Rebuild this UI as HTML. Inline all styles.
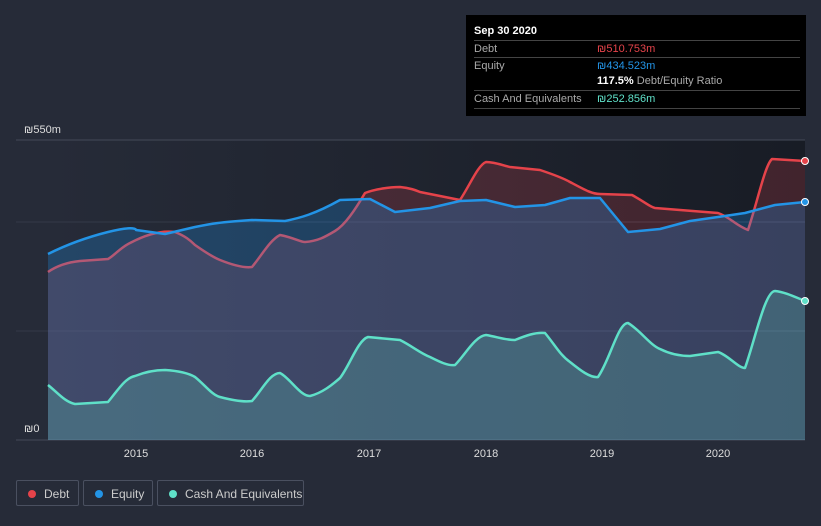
<!DOCTYPE html>
<html><head><meta charset="utf-8"><style>
body{margin:0;width:821px;height:526px;background:#262b38;font-family:"Liberation Sans",sans-serif;overflow:hidden;position:relative}
.tip{position:absolute;left:466px;top:15px;width:340px;height:101px;background:#000;color:#fff;font-size:11px}
.tip .r{position:absolute;left:8px;right:6px;border-top:1px solid #444;height:16px}
.tip span{position:absolute;top:2px}
.leg{position:absolute;top:480px;height:26px;border:1px solid #4a5060;border-radius:2px;color:#ccc;font-size:12px;line-height:26px;box-sizing:border-box}
.leg i{position:absolute;left:11px;top:9px;width:8px;height:8px;border-radius:50%}
.leg b{font-weight:normal;position:absolute;left:27px}
</style></head><body>
<svg width="821" height="526" style="position:absolute;left:0;top:0">
<defs><linearGradient id="bg" x1="0" y1="0" x2="1" y2="0"><stop offset="0" stop-color="#262b38"/><stop offset="1" stop-color="#181c25"/></linearGradient></defs>
<rect x="48" y="140" width="757" height="300" fill="url(#bg)"/>
<line x1="16" y1="140" x2="805" y2="140" stroke="#444a58"/>
<line x1="16" y1="222" x2="805" y2="222" stroke="#343a48"/>
<line x1="16" y1="331" x2="805" y2="331" stroke="#343a48"/>
<line x1="16" y1="440" x2="805" y2="440" stroke="#444a58"/>
<g stroke-linejoin="round" stroke-width="2.5">
<path d="M48,272 C58,265 70,262 80,261 L108,259 C115,255 120,248 130,243 C145,235 160,230 175,232 C185,236 190,240 195,245 C205,252 215,258 220,260 C235,266 245,268 252,267 C262,255 270,240 280,235 C295,238 300,242 305,242 C318,241 325,237 335,231 C345,225 355,210 365,193 C375,189 390,187 400,187 C410,188 415,190 420,192 L460,200 C470,185 478,165 486,162 C495,162 505,166 510,167 L540,170 C555,175 563,178 570,182 C585,190 592,194 600,194 L632,195 C645,202 650,207 655,208 L680,210 L718,213 C730,217 735,225 748,230 C758,200 765,165 772,159 L805,161 L805,440 L48,440Z" fill="rgba(232,70,80,0.2)" stroke="none"/>
<path d="M48,272 C58,265 70,262 80,261 L108,259 C115,255 120,248 130,243 C145,235 160,230 175,232 C185,236 190,240 195,245 C205,252 215,258 220,260 C235,266 245,268 252,267 C262,255 270,240 280,235 C295,238 300,242 305,242 C318,241 325,237 335,231 C345,225 355,210 365,193 C375,189 390,187 400,187 C410,188 415,190 420,192 L460,200 C470,185 478,165 486,162 C495,162 505,166 510,167 L540,170 C555,175 563,178 570,182 C585,190 592,194 600,194 L632,195 C645,202 650,207 655,208 L680,210 L718,213 C730,217 735,225 748,230 C758,200 765,165 772,159 L805,161" fill="none" stroke="#e5434a"/>
<path d="M48,254 C60,248 80,239 108,232 S136,230 136,230 L165,234 L195,227 C210,224 220,222 252,220 L285,221 C300,218 315,214 340,200 L370,199 L395,212 L430,208 L460,201 L486,200 L515,207 L545,205 L570,198 L600,198 L628,232 L660,229 L690,221 L718,217 L745,213 L775,205 L805,202 L805,440 L48,440Z" fill="rgba(33,150,243,0.25)" stroke="none"/>
<path d="M48,254 C60,248 80,239 108,232 S136,230 136,230 L165,234 L195,227 C210,224 220,222 252,220 L285,221 C300,218 315,214 340,200 L370,199 L395,212 L430,208 L460,201 L486,200 L515,207 L545,205 L570,198 L600,198 L628,232 L660,229 L690,221 L718,217 L745,213 L775,205 L805,202" fill="none" stroke="#2394e6"/>
<path d="M48,385 C58,393 65,402 75,404 L108,402 C118,390 125,378 135,376 C150,370 160,370 165,370 C180,371 190,374 195,377 C205,385 212,395 220,397 C235,401 245,402 252,401 C262,390 270,373 280,373 C290,378 300,396 310,396 C322,393 332,385 340,378 C350,365 358,340 368,337 L400,340 C412,346 420,353 430,357 C440,362 448,366 455,365 C465,355 475,336 486,335 C498,337 505,340 515,340 C525,336 535,332 545,333 C555,345 560,355 570,362 C580,370 590,378 598,377 C610,360 618,323 628,323 C640,330 650,345 660,349 C670,354 680,356 690,356 L718,352 C728,355 738,368 745,368 C755,340 765,291 775,291 C785,292 795,297 805,301 L805,440 L48,440Z" fill="rgba(100,225,200,0.22)" stroke="none"/>
<path d="M48,385 C58,393 65,402 75,404 L108,402 C118,390 125,378 135,376 C150,370 160,370 165,370 C180,371 190,374 195,377 C205,385 212,395 220,397 C235,401 245,402 252,401 C262,390 270,373 280,373 C290,378 300,396 310,396 C322,393 332,385 340,378 C350,365 358,340 368,337 L400,340 C412,346 420,353 430,357 C440,362 448,366 455,365 C465,355 475,336 486,335 C498,337 505,340 515,340 C525,336 535,332 545,333 C555,345 560,355 570,362 C580,370 590,378 598,377 C610,360 618,323 628,323 C640,330 650,345 660,349 C670,354 680,356 690,356 L718,352 C728,355 738,368 745,368 C755,340 765,291 775,291 C785,292 795,297 805,301" fill="none" stroke="#5fe0c8"/>
</g>
<circle cx="805" cy="161" r="3.5" fill="#e5434a" stroke="#fff" stroke-width="1"/>
<circle cx="805" cy="202" r="3.5" fill="#2394e6" stroke="#fff" stroke-width="1"/>
<circle cx="805" cy="301" r="3.5" fill="#5fe0c8" stroke="#fff" stroke-width="1"/>
<g fill="#ddd" font-size="11" font-family="Liberation Sans" text-anchor="middle">
<text x="136" y="457">2015</text><text x="252" y="457">2016</text><text x="369" y="457">2017</text><text x="486" y="457">2018</text><text x="602" y="457">2019</text><text x="718" y="457">2020</text>
</g>
<g fill="#ddd" font-size="11" font-family="Liberation Sans"><text x="24" y="133">₪550m</text><text x="24" y="432">₪0</text></g>
</svg>
<div class="tip">
<div style="position:absolute;left:8px;top:10px;font-weight:bold">Sep 30 2020</div>
<div class="r" style="top:25px"><span style="color:#aaa">Debt</span><span style="left:123px;color:#e5434a">₪510.753m</span></div>
<div class="r" style="top:42px;border-top:1px solid #444"><span style="color:#aaa">Equity</span><span style="left:123px;color:#2394e6">₪434.523m</span></div>
<div style="position:absolute;left:131px;top:60px"><b>117.5%</b> <span style="color:#aaa;position:static">Debt/Equity Ratio</span></div>
<div class="r" style="top:75px"><span style="color:#aaa">Cash And Equivalents</span><span style="left:123px;color:#5fe0c8">₪252.856m</span></div>
<div style="position:absolute;left:8px;right:6px;top:93px;border-top:1px solid #444"></div>
</div>
<div class="leg" style="left:16px;width:63px"><i style="background:#e5434a"></i><b>Debt</b></div>
<div class="leg" style="left:83px;width:70px"><i style="background:#2394e6"></i><b>Equity</b></div>
<div class="leg" style="left:157px;width:147px"><i style="background:#5fe0c8"></i><b>Cash And Equivalents</b></div>
</body></html>
